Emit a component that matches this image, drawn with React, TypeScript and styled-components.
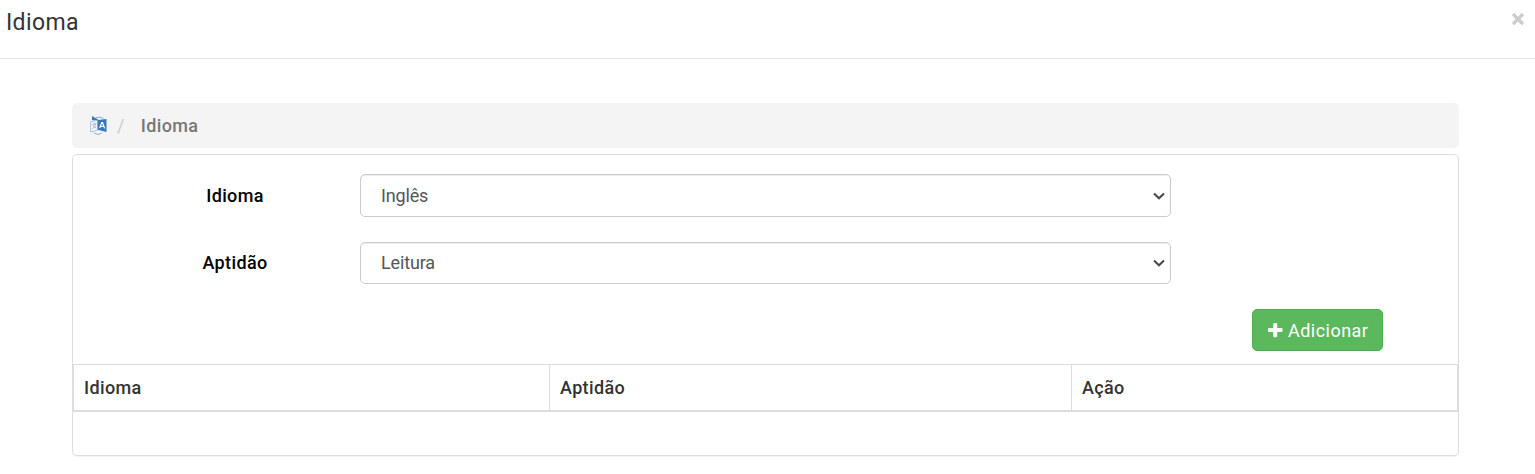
import React from 'react';
import styled, { createGlobalStyle } from 'styled-components';

const GlobalStyle = createGlobalStyle`
  *, *::before, *::after { box-sizing: border-box; }
  body { margin: 0; background: #fff; color: #333; font: 400 18px/26px Roboto, sans-serif; letter-spacing: 0.36px; overflow: hidden; }
`;

const Page = styled.div`
  height: 474px;
`;

const Header = styled.header`
  display: flex;
  justify-content: space-between;
  height: 59px;
  padding: 6px 10px 0 6px;
  border-bottom: 1px solid #e5e5e5;
`;

const Title = styled.h4`
  margin: 0;
  font-size: 23px;
  line-height: 33px;
  font-weight: 400;
  letter-spacing: 0.36px;
`;

const Close = styled.button`
  display: flex;
  width: 14px;
  height: 14px;
  margin: 6px 0 0;
  padding: 0;
  border: 0;
  background: none;
  color: #ccc;
`;

const Body = styled.main`
  padding: 44px 76px 0 72px;
`;

const Breadcrumb = styled.nav`
  display: flex;
  align-items: center;
  height: 45px;
  padding-left: 18px;
  border-radius: 5px;
  background: #f4f4f4;
  color: #777;
`;

const Slash = styled.span`
  margin: 0 16px 0 10px;
  color: #ccc;
`;

const Strong = styled.span`
  font-weight: 500;
`;

const Panel = styled.section`
  height: 302px;
  margin-top: 6px;
  padding-top: 19px;
  border: 1px solid #ddd;
  border-radius: 5px;
  box-shadow: 0 1px 1px rgba(0, 0, 0, 0.05);
`;

const Field = styled.div<{ $height: number }>`
  display: grid;
  grid-template-columns: 287px 811px;
  height: ${(p) => p.$height}px;
  margin-bottom: 25px;
`;

const Label = styled.label`
  align-self: center;
  padding-left: 37px;
  text-align: center;
  font-weight: 500;
  color: #000;
`;

const SelectBox = styled.div`
  display: flex;
  align-items: center;
  justify-content: space-between;
  padding: 0 5px 0 20px;
  border: 1px solid #ccc;
  border-radius: 5px;
  box-shadow: inset 0 1px 1px rgba(0, 0, 0, 0.075);
  color: #555;
  letter-spacing: -0.15px;
`;

const Actions = styled.div`
  display: flex;
  justify-content: flex-end;
  padding-right: 75px;
`;

const AddButton = styled.button`
  display: flex;
  align-items: center;
  gap: 4px;
  width: 131px;
  height: 42px;
  padding: 1px 0 0 14px;
  border: 1px solid #4cae4c;
  border-radius: 5px;
  background: #5cb85c;
  color: #fff;
  font: inherit;
  letter-spacing: 0.47px;
`;

const Table = styled.div`
  display: grid;
  grid-template-columns: 477px 522px 386px;
  height: 48px;
  margin-top: 13px;
  border: solid #ddd;
  border-width: 1px 0 2px;
`;

const HeadCell = styled.div`
  display: flex;
  align-items: center;
  padding: 1px 10px 0;
  border-right: 1px solid #ddd;
  font-weight: 500;
  &:first-child { border-left: 1px solid #ddd; }
`;

const TranslateIcon = () => (
  <svg width="17" height="19" viewBox="0 0 17 19" fill="none">
    <path d="M6 1.7 Q11 .4 13.5 2.5 M4 17 Q8 20 12 17" stroke="#8eabd0" />
    <path d="M2 0 L8 3.5 V5 L2 4 Z" fill="#337ac0" />
    <path d="M.7 5.8 L8 4.1 V14 L.7 16 Z" fill="#f7f8fa" stroke="#a4bad7" strokeWidth=".9" />
    <path d="M2.3 8.5 L6.5 7.6 M4.2 6.6 V8 M5.8 8 Q4.8 11.8 2.2 13 M2.8 9.2 Q4 11.5 6.4 12" stroke="#8eabd0" strokeWidth=".8" />
    <path d="M7.5 4 L16.5 3 V16 L7.5 13.8 Z" fill="#337ac0" />
    <path d="M9.7 12 L11.7 6.5 H12.6 L14.6 12.4 M10.5 10.4 H14" stroke="#fff" strokeWidth="1.2" />
  </svg>
);

const Chevron = () => (
  <svg width="12" height="8" viewBox="0 0 12 8" fill="none">
    <path d="M1 1.5 L6 6.2 L11 1.5" stroke="#4a4a4a" strokeWidth="2.1" />
  </svg>
);

const PlusIcon = () => (
  <svg width="17" height="17" viewBox="0 0 17 17">
    <path d="M6.2 2 Q6.2 1 7.2 1 H9.2 Q10.2 1 10.2 2 V6 H14.5 Q15.5 6 15.5 7 V9 Q15.5 10 14.5 10 H10.2 V14.2 Q10.2 15.2 9.2 15.2 H7.2 Q6.2 15.2 6.2 14.2 V10 H2 Q1 10 1 9 V7 Q1 6 2 6 H6.2 Z" fill="#fff" />
  </svg>
);

export default function App() {
  return (
    <Page>
      <GlobalStyle />
      <Header>
        <Title>Idioma</Title>
        <Close aria-label="Fechar">
          <svg width="14" height="14" viewBox="0 0 14 14">
            <path d="M2 2 L12 12 M12 2 L2 12" stroke="currentColor" strokeWidth="3.3" />
          </svg>
        </Close>
      </Header>
      <Body>
        <Breadcrumb>
          <TranslateIcon />
          <Slash>/</Slash>
          <Strong>Idioma</Strong>
        </Breadcrumb>
        <Panel>
          <Field $height={43}>
            <Label>Idioma</Label>
            <SelectBox>Inglês<Chevron /></SelectBox>
          </Field>
          <Field $height={42}>
            <Label>Aptidão</Label>
            <SelectBox>Leitura<Chevron /></SelectBox>
          </Field>
          <Actions>
            <AddButton><PlusIcon />Adicionar</AddButton>
          </Actions>
          <Table>
            <HeadCell>Idioma</HeadCell>
            <HeadCell>Aptidão</HeadCell>
            <HeadCell>Ação</HeadCell>
          </Table>
        </Panel>
      </Body>
    </Page>
  );
}
